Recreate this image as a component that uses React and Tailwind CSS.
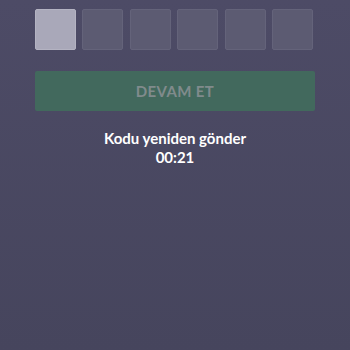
import React from 'react';

const App = () => {
  const cells = [0, 1, 2, 3, 4, 5];

  return (
    <div className="w-[350px] h-[350px] bg-gradient-to-b from-[#4d4b66] to-[#46455d] font-['Lato',sans-serif]">
      <div className="px-[35px] pt-[9px]">
        {/* Code boxes */}
        <div className="flex gap-[6.4px]">
          {cells.map((i) => (
            <div
              key={i}
              className={`w-[41px] h-[41px] rounded-[2px] border ${
                i === 0 ? 'bg-[#a9a8b9] border-[#b4b3c2]' : 'bg-[#5c5b72] border-[#64637a]'
              }`}
            ></div>
          ))}
        </div>

        {/* Continue button */}
        <button className="mt-[21px] w-[280px] h-[40px] rounded-[2px] bg-[#42695d] text-[#808b8c] text-[15px] font-bold tracking-wide">
          DEVAM ET
        </button>

        {/* Resend */}
        <div className="mt-[18px] text-center text-white font-bold text-[15px] leading-[19px]">
          <p>Kodu yeniden gönder</p>
          <p>00:21</p>
        </div>
      </div>
    </div>
  );
};

export default App;
